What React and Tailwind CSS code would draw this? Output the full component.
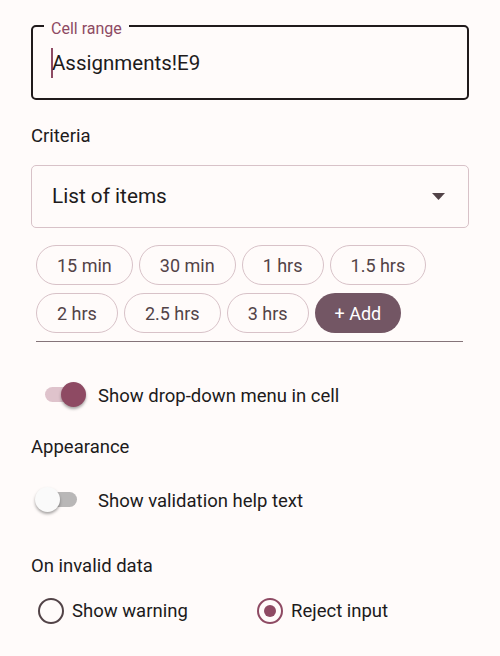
import React from "react";

const chips = ["15 min", "30 min", "1 hrs", "1.5 hrs", "2 hrs", "2.5 hrs", "3 hrs"];

const Chip = ({ label }) => (
  <div className="h-[40px] px-[20px] rounded-full border border-[#d8c2c8] flex items-center text-[18px] text-[#524347]">
    {label}
  </div>
);

const SwitchOn = () => (
  <div className="relative w-[67px] h-[48px] shrink-0">
    <div className="absolute left-[14px] top-[16px] w-[38px] h-[15px] rounded-full bg-[#dfc3cc]" />
    <div className="absolute left-[30px] top-[11px] w-[25px] h-[25px] rounded-full bg-[#8e4a63] shadow-[0_2px_3px_rgba(0,0,0,0.35)]" />
  </div>
);

const SwitchOff = () => (
  <div className="relative w-[67px] h-[48px] shrink-0">
    <div className="absolute left-[6px] top-[16px] w-[40px] h-[15px] rounded-full bg-[#b9b7b7]" />
    <div className="absolute left-[4px] top-[11px] w-[25px] h-[25px] rounded-full bg-[#fafafa] shadow-[0_2px_3px_rgba(0,0,0,0.35)]" />
  </div>
);

export default function App() {
  return (
    <div className="min-h-screen bg-[#fffbfa] px-[31px] pt-[25px] font-['Roboto',sans-serif] text-[#201a1b]">
      {/* cell range field */}
      <div className="relative h-[75px] rounded-[5px] border-[2.5px] border-[#201a1b] flex items-center pl-[18px]">
        <span className="absolute -top-[7px] left-[11px] px-[7px] bg-[#fffbfa] text-[16px] leading-[18px] text-[#8e4a63]">
          Cell range
        </span>
        <span className="w-[2px] h-[30px] bg-[#8e4a63] -mr-[1px]" />
        <span className="text-[20.5px] leading-[30px]">Assignments!E9</span>
      </div>

      <div className="mt-[24px] text-[18.5px] leading-[24px]">Criteria</div>

      {/* dropdown */}
      <div className="mt-[17px] h-[63px] rounded-[5px] border border-[#d8c2c8] flex items-center justify-between pl-[20px] pr-[23px]">
        <span className="text-[20.75px]">List of items</span>
        <svg width="13" height="7" viewBox="0 0 13 7">
          <polygon points="0,0 13,0 6.5,7" fill="#524347" />
        </svg>
      </div>

      {/* chips */}
      <div className="mt-[17px] ml-[5px] mr-[6px] pb-[8px] border-b border-[#857479] flex flex-wrap gap-x-[6px] gap-y-[8px]">
        {chips.map((c) => (
          <Chip key={c} label={c} />
        ))}
        <div className="h-[40px] px-[20px] rounded-full bg-[#735664] flex items-center text-[18px] text-white">
          + Add
        </div>
      </div>

      <div className="mt-[29px] h-[48px] flex items-center">
        <SwitchOn />
        <span className="pt-[3px] text-[18.5px]">Show drop-down menu in cell</span>
      </div>

      <div className="mt-[16px] text-[18.5px] leading-[24px]">Appearance</div>

      <div className="mt-[17px] h-[48px] flex items-center">
        <SwitchOff />
        <span className="pt-[3px] text-[18.5px]">Show validation help text</span>
      </div>

      <div className="mt-[30px] text-[18.5px] leading-[24px]">On invalid data</div>

      <div className="mt-[9px] h-[48px] grid grid-cols-2">
        <label className="flex items-center pl-[7px] gap-[8px]">
          <span className="w-[26px] h-[26px] rounded-full border-[2.5px] border-[#524347]" />
          <span className="pt-[2px] text-[18.5px]">Show warning</span>
        </label>
        <label className="flex items-center pl-[7px] gap-[8px]">
          <span className="w-[26px] h-[26px] rounded-full border-[2.5px] border-[#8e4a63] flex items-center justify-center">
            <span className="w-[12px] h-[12px] rounded-full bg-[#8e4a63]" />
          </span>
          <span className="pt-[2px] text-[18.5px]">Reject input</span>
        </label>
      </div>
    </div>
  );
}
